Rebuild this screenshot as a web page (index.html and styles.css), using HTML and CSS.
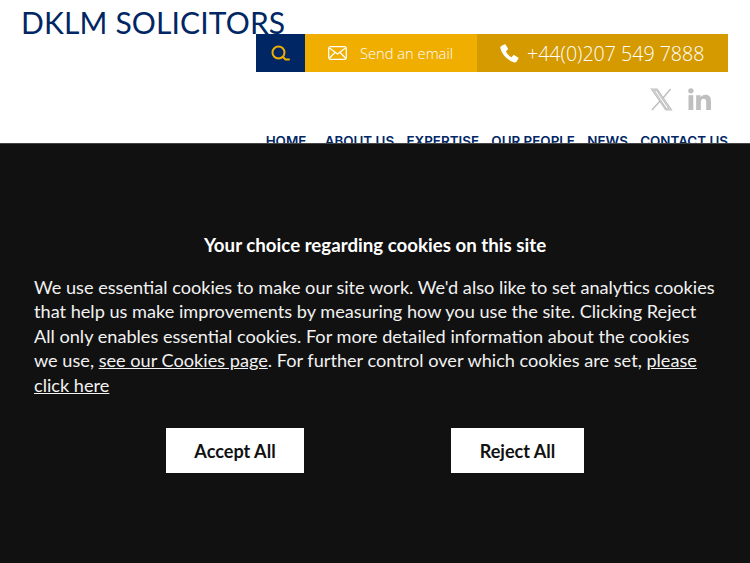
FILE: index.html
```html
<!DOCTYPE html>
<html>
<head>
    <title>DKLM Solicitors</title>
    <link rel="stylesheet" href="styles.css">
</head>
<body>
    <header class="site-header">
        <div class="logo">DKLM SOLICITORS</div>
        <div class="contact-bar">
            <a class="search-btn">
                <svg width="20" height="16" viewBox="0 0 20 16" fill="none" stroke="#f0ae00" stroke-width="2">
                    <circle cx="7.500" cy="7.500" r="6"/>
                    <path d="M12 12l2.500 2.500h3.500" stroke-linecap="round"/>
                </svg>
            </a>
            <a class="email-btn">
                <svg width="19" height="14" viewBox="0 0 19 14" fill="none" stroke="#fff" stroke-width="1.3">
                    <rect x="0.700" y="0.700" width="17.600" height="12.600" rx="2"/>
                    <path d="M1.500 2l8 6 8-6M1.500 12l5.500-5.500M17.500 12l-5.500-5.500"/>
                </svg>
                <span>Send an email</span>
            </a>
            <a class="phone-btn">
                <svg width="19" height="19" viewBox="0 0 20 20" fill="#fff">
                    <path d="M4.600 0.500L1.300 2.200C0.500 2.700 0.200 3.400 0.400 4.300 1.500 10.600 8.400 17.800 15.300 19.500 16.200 19.700 16.800 19.400 17.300 18.700L19.300 15.600C19.600 15.100 19.500 14.600 19 14.300L15.200 11.800C14.700 11.500 14.200 11.600 13.800 12L12.200 13.900C9.800 12.700 7.300 10.100 6.200 7.600L8 6C8.400 5.600 8.500 5.100 8.200 4.600L6 0.900C5.700 0.400 5.100 0.200 4.600 0.500Z"/>
                </svg>
                <span>+44(0)207 549 7888</span>
            </a>
        </div>
        <div class="social">
            <svg width="23" height="23" viewBox="0 0 24 24" fill="none" stroke="#bfbfbf" stroke-width="1.200">
                <path d="M1.500 1h6l15 22h-6zM4.200 2.300l12.800 19.400h2.800L6.800 2.300z"/>
                <path d="M21.500 1l-8.300 10M10.500 13.500L2 23" stroke-width="1.500"/>
            </svg>
            <svg width="23" height="22" viewBox="0 0 24 23" fill="#bfbfbf">
                <circle cx="3" cy="3" r="2.800"/>
                <rect x="0.500" y="7.500" width="5" height="15.500"/>
                <path d="M8.500 7.500h4.700v2.200c.9-1.500 2.700-2.600 5-2.600 4.300 0 5.800 2.600 5.800 6.900V23h-5v-8c0-2-.5-3.700-2.700-3.700-2.200 0-2.900 1.600-2.900 3.700v8h-4.900z"/>
            </svg>
        </div>
        <nav class="main-nav">
            <a>HOME</a>
            <a class="nav-about">ABOUT US</a>
            <a>EXPERTISE</a>
            <a>OUR PEOPLE</a>
            <a>NEWS</a>
            <a>CONTACT US</a>
        </nav>
    </header>

    <div class="cookie-overlay">
        <h2 class="cookie-title">Your choice regarding cookies on this site</h2>
        <p class="cookie-text">We use essential cookies to make our site work. We'd also like to set analytics cookies that help us make improvements by measuring how you use the site. Clicking Reject All only enables essential cookies. For more detailed information about the cookies we use, <a href="#">see our Cookies page</a>. For further control over which cookies are set, <a href="#">please click here</a></p>
        <div class="cookie-buttons">
            <button class="btn-accept">Accept All</button>
            <button class="btn-reject">Reject All</button>
        </div>
    </div>
</body>
</html>
```

FILE: styles.css
```css
html, body {
    margin: 0;
    padding: 0;
    height: 563px;
    overflow: hidden;
}

body {
    font-family: "Open Sans", Arial, sans-serif;
    background-color: #fff;
}

.site-header {
    display: flex;
    flex-direction: column;
}

.logo {
    font-family: "Lato", sans-serif;
    font-size: 30px;
    line-height: 34px;
    height: 29px;
    padding: 5px 0 0 21px;
    color: #002664;
    letter-spacing: 0.15px;
}

.contact-bar {
    display: flex;
    align-self: flex-end;
    height: 38px;
    margin-right: 22px;
    color: #fff;
}

.contact-bar a {
    display: flex;
    align-items: center;
}

.search-btn {
    width: 49px;
    justify-content: center;
    background-color: #002664;
}

.email-btn {
    width: 172px;
    padding-left: 23px;
    box-sizing: border-box;
    gap: 13px;
    background-color: #f0ae00;
    font-size: 14.700px;
    font-weight: 300;
}

.phone-btn {
    width: 251px;
    padding-left: 23px;
    box-sizing: border-box;
    gap: 8px;
    background-color: #d49a00;
    font-size: 19.600px;
    font-weight: 300;
}

.social {
    display: flex;
    align-self: flex-end;
    gap: 15px;
    margin: 16px 39px 0 0;
    height: 23px;
}

.main-nav {
    display: flex;
    align-self: flex-end;
    gap: 12.300px;
    margin: 21px 22px 0 0;
    font-family: "Inter", sans-serif;
    font-size: 13.400px;
    line-height: 18px;
    font-weight: 600;
    color: #002664;
}

.nav-about {
    margin-left: 6px;
}

/* sits over the page, hides the bottom of the nav */
.cookie-overlay {
    position: fixed;
    top: 143px;
    left: 0;
    right: 0;
    bottom: 0;
    padding: 89px 34px 0;
    background-color: #111;
    border-top: 1px solid #444;
    color: #f2f2f2;
    font-family: "Lato", sans-serif;
}

.cookie-title {
    margin: 0;
    text-align: center;
    font-size: 18.700px;
    line-height: 24px;
    font-weight: 700;
    color: #fff;
}

.cookie-text {
    margin: 18px 0 0;
    font-size: 18.150px;
    line-height: 24.400px;
}

.cookie-text a {
    color: #f2f2f2;
}

.cookie-buttons {
    display: flex;
    margin-top: 31px;
    padding-left: 132px;
    gap: 147px;
}

.cookie-buttons button {
    height: 45px;
    border: none;
    background-color: #fff;
    color: #111;
    font-family: "Lato", sans-serif;
    font-size: 18.100px;
    font-weight: 700;
}

.btn-accept {
    width: 138px;
}

.btn-reject {
    width: 133px;
}
```
